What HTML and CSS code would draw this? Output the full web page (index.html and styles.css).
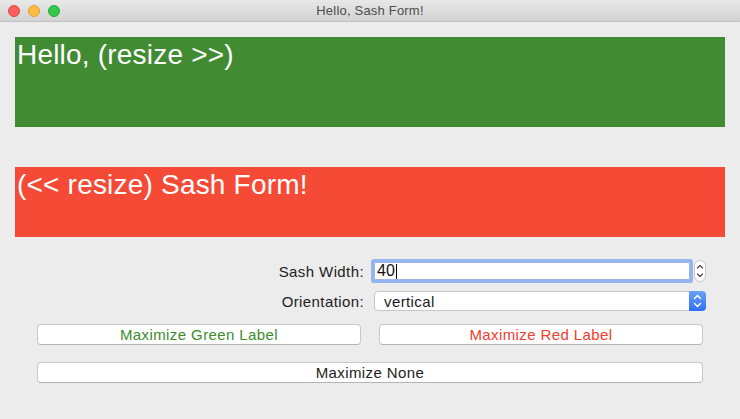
FILE: index.html
```html
<!DOCTYPE html>
<html>
<head>
<meta charset="utf-8">
<link rel="stylesheet" href="styles.css">
</head>
<body>
<div class="window">
  <div class="titlebar">
    <div class="lights">
      <span class="light red-light"></span>
      <span class="light yellow-light"></span>
      <span class="light green-light"></span>
    </div>
    <div class="title">Hello, Sash Form!</div>
    <div class="spacer"></div>
  </div>
  <div class="content">
    <div class="pane pane-green">Hello, (resize &gt;&gt;)</div>
    <div class="pane pane-red">(&lt;&lt; resize) Sash Form!</div>
    <div class="form">
      <div class="field-row row-width">
        <div class="field-label">Sash Width:</div>
        <div class="field-control">
          <div class="text-input"><span class="value">40</span><span class="caret"></span></div>
          <div class="stepper">
            <svg width="12" height="22" viewBox="0 0 12 22">
              <path d="M3.5 8 L6 5.5 L8.5 8" fill="none" stroke="#4a4a4a" stroke-width="1.2" stroke-linecap="round" stroke-linejoin="round"/>
              <path d="M3.5 14 L6 16.5 L8.5 14" fill="none" stroke="#4a4a4a" stroke-width="1.2" stroke-linecap="round" stroke-linejoin="round"/>
            </svg>
          </div>
        </div>
      </div>
      <div class="field-row row-orient">
        <div class="field-label">Orientation:</div>
        <div class="field-control">
          <div class="select">
            <span class="select-text">vertical</span>
            <span class="select-arrows">
              <svg width="17" height="20" viewBox="0 0 17 20">
                <path d="M5.5 7.5 L8.5 4.5 L11.5 7.5" fill="none" stroke="#ffffff" stroke-width="1.5" stroke-linecap="round" stroke-linejoin="round"/>
                <path d="M5.5 12.5 L8.5 15.5 L11.5 12.5" fill="none" stroke="#ffffff" stroke-width="1.5" stroke-linecap="round" stroke-linejoin="round"/>
              </svg>
            </span>
          </div>
        </div>
      </div>
      <div class="button-row">
        <div class="button btn-green">Maximize Green Label</div>
        <div class="button btn-red">Maximize Red Label</div>
      </div>
      <div class="button btn-none">Maximize None</div>
    </div>
  </div>
</div>
</body>
</html>
```
FILE: styles.css
```css
html, body {
  margin: 0;
  padding: 0;
}
body {
  width: 740px;
  height: 419px;
  overflow: hidden;
  background: #ececec;
  font-family: "Liberation Sans", Arial, sans-serif;
}
.window {
  width: 740px;
  height: 419px;
  background: #ececec;
}
.titlebar {
  height: 21px;
  border-bottom: 1px solid #c2c2c2;
  background: linear-gradient(#e8e8e8, #d3d3d3);
  display: grid;
  grid-template-columns: 1fr auto 1fr;
  align-items: center;
}
.lights {
  display: flex;
  gap: 8px;
  padding-left: 8px;
  padding-top: 1px;
}
.light {
  width: 12px;
  height: 12px;
  border-radius: 50%;
  box-sizing: border-box;
}
.red-light { background: #fc605c; border: 1px solid #de4a44; }
.yellow-light { background: #fdbc40; border: 1px solid #dea235; }
.green-light { background: #34c84a; border: 1px solid #2aab3c; }
.title {
  font-size: 13px;
  color: #4d4d4d;
  letter-spacing: 0.2px;
}
.content {
  padding: 15px 15px 0 15px;
}
.pane {
  color: #ffffff;
  font-size: 28px;
  line-height: 32px;
  padding-top: 2px;
  padding-left: 2px;
  letter-spacing: 0.2px;
  box-sizing: border-box;
  white-space: nowrap;
}
.pane-green {
  background: #418b33;
  height: 90px;
}
.pane-red {
  background: #f44a36;
  height: 70px;
  margin-top: 40px;
}
.form {
  margin-top: 22px;
  padding-left: 22px;
  padding-right: 19px;
  font-size: 15px;
  letter-spacing: 0.4px;
  color: #222222;
}
.field-row {
  display: flex;
  align-items: center;
}
.row-width {
  height: 24px;
}
.row-orient {
  height: 20px;
  margin-top: 8px;
}
.field-label {
  flex: 1;
  text-align: right;
  padding-right: 7px;
  white-space: nowrap;
}
.field-control {
  width: 335px;
  display: flex;
  align-items: center;
}
.text-input {
  margin-left: 3px;
  width: 316px;
  height: 18px;
  box-sizing: border-box;
  background: #ffffff;
  border: 1px solid #9fb6e4;
  border-radius: 1px;
  box-shadow: 0 0 0 3px #93b5f2;
  display: flex;
  align-items: center;
  padding-left: 2px;
  font-size: 16px;
  letter-spacing: 0;
  color: #111111;
}
.caret {
  display: inline-block;
  width: 1px;
  height: 15px;
  background: #000000;
  margin-left: 1px;
}
.stepper {
  margin-left: 4px;
  width: 12px;
  height: 22px;
  box-sizing: border-box;
  background: #ffffff;
  border: 1px solid #c9c9c9;
  border-radius: 6px;
  display: flex;
}
.stepper svg {
  display: block;
  margin: -1px;
}
.select {
  margin-left: 3px;
  width: 332px;
  height: 20px;
  box-sizing: border-box;
  background: #ffffff;
  border: 1px solid #c6c6c6;
  border-radius: 4px;
  display: flex;
  align-items: center;
}
.select-text {
  flex: 1;
  padding-left: 9px;
  color: #1a1a1a;
}
.select-arrows {
  width: 17px;
  height: 20px;
  margin: -1px -1px -1px 0;
  border-radius: 0 4px 4px 0;
  background: linear-gradient(#6aa1f8, #2f6ff3);
  display: flex;
}
.select-arrows svg {
  display: block;
}
.button {
  height: 21px;
  box-sizing: border-box;
  background: #ffffff;
  border: 1px solid #c8c8c8;
  border-bottom-color: #b4b4b4;
  border-radius: 4px;
  display: flex;
  align-items: center;
  justify-content: center;
  white-space: nowrap;
}
.button-row {
  margin-top: 13px;
  margin-right: 3px;
  display: grid;
  grid-template-columns: 1fr 1fr;
  column-gap: 18px;
}
.btn-green { color: #3b8c2d; }
.btn-red { color: #f23c2c; }
.btn-none {
  margin-top: 17px;
  margin-right: 3px;
  color: #222222;
}
```
